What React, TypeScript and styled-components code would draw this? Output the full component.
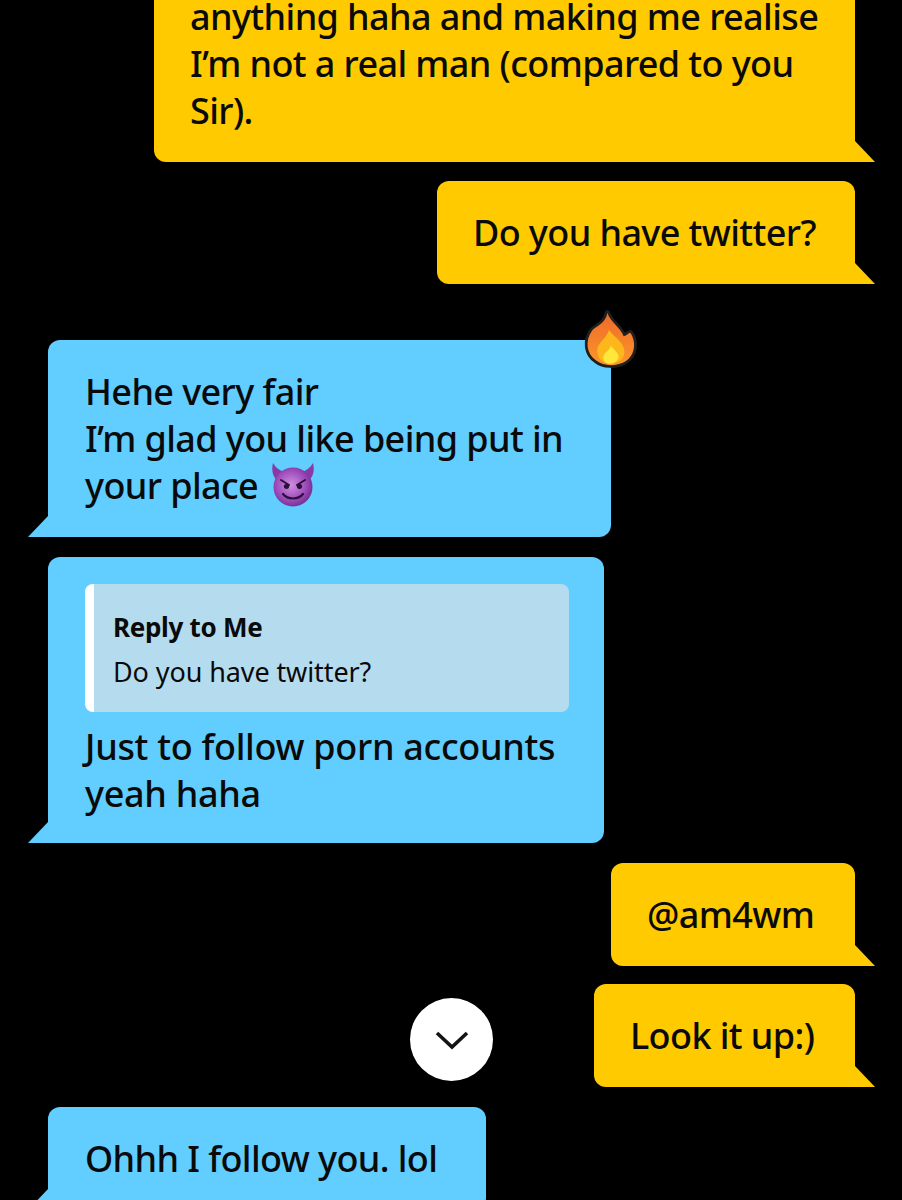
import React from 'react';
import styled, { createGlobalStyle } from 'styled-components';

const GlobalStyle = createGlobalStyle`
  html, body {
    margin: 0;
    padding: 0;
    background: #000;
  }
`;

// ─── Styled Components ────────────────────────────────────────────────────────

const Screen = styled.main`
  position: relative;
  width: 902px;
  height: 1200px;
  overflow: hidden;
  background: #000;
  font-family: 'Noto Sans', 'Open Sans', sans-serif;
  color: #0a0a0a;
`;

const Thread = styled.div`
  display: flex;
  flex-direction: column;
  padding: 0 47px 0 48px;
  margin-top: -35px;
`;

const Bubble = styled.div<{ $mine?: boolean; $width: number; $gap: number }>`
  position: relative;
  box-sizing: border-box;
  width: ${(p) => p.$width}px;
  margin-top: ${(p) => p.$gap}px;
  align-self: ${(p) => (p.$mine ? 'flex-end' : 'flex-start')};
  padding: 28px 0 28px ${(p) => (p.$mine ? 36 : 37)}px;
  background: ${(p) => (p.$mine ? '#ffcb00' : '#62cdff')};
  border-radius: ${(p) => (p.$mine ? '12px 12px 0 12px' : '12px 12px 12px 0')};
  font-size: 36px;
  font-weight: 500;
  line-height: 47px;
  letter-spacing: -0.6px;
  white-space: nowrap;

  &::after {
    content: '';
    position: absolute;
    bottom: 0;
    width: 20px;
    height: 21px;
    background: inherit;
    ${(p) =>
      p.$mine
        ? 'right: -20px; clip-path: polygon(0 0, 100% 100%, 0 100%);'
        : 'left: -20px; clip-path: polygon(100% 0, 100% 100%, 0 100%);'}
  }
`;

const ReplyQuote = styled.div`
  box-sizing: border-box;
  width: 484px;
  height: 128px;
  margin: -1px 0 11px 0;
  padding: 21px 0 0 19px;
  background: #b5dcee;
  border-left: 9px solid #fff;
  border-radius: 8px;
`;

const ReplyTitle = styled.div`
  font-size: 26px;
  line-height: 44px;
  font-weight: 700;
  letter-spacing: -0.3px;
`;

const ReplyBody = styled.div`
  font-size: 27px;
  font-weight: 400;
  line-height: 46px;
  letter-spacing: -0.1px;
`;

const ReplyText = styled.div`
  margin-bottom: -2px;
  letter-spacing: -0.3px;
`;

const ReactionIcon = styled.svg`
  position: absolute;
  top: -44px;
  right: -53px;
  width: 99px;
  height: 88px;
`;

const InlineEmoji = styled.svg`
  width: 46px;
  height: 46px;
  margin: -14px 0 -14px 12px;
  vertical-align: 5px;
`;

const ScrollDownButton = styled.button`
  position: absolute;
  left: 410px;
  top: 998px;
  width: 83px;
  height: 83px;
  padding: 0;
  border: none;
  border-radius: 50%;
  background: #fff;
  display: flex;
  align-items: center;
  justify-content: center;
`;

// ─── Drawings ─────────────────────────────────────────────────────────────────

const FireEmoji = () => (
  <ReactionIcon viewBox="0 0 270 240">
    <defs>
      <linearGradient id="flame" x1="0" y1="0" x2="0" y2="1">
        <stop offset="0" stopColor="#ee6a2a" />
        <stop offset="1" stopColor="#fb962b" />
      </linearGradient>
    </defs>
    <path
      d="M116 46C122 70 150 84 160 110C168 108 174 100 178 100C194 122 194 162 162 180C140 192 105 192 85 176C58 158 54 122 74 94C86 82 110 76 116 46Z"
      fill="url(#flame)"
      stroke="#1f1f1f"
      strokeWidth="15"
      strokeLinejoin="round"
      paintOrder="stroke"
    />
    <path
      d="M120 92C130 110 162 125 162 152C162 176 142 184 122 184C100 184 86 167 88 146C90 125 115 115 120 92Z"
      fill="#fdb71c"
    />
    <path
      d="M125 135C135 150 148 155 146 168C143 180 130 185 122 185C110 185 103 176 105 165C108 152 122 150 125 135Z"
      fill="#ffe83a"
    />
  </ReactionIcon>
);

const DevilEmoji = () => (
  <InlineEmoji viewBox="0 0 46 46">
    <defs>
      <radialGradient id="devilFace" cx="0.45" cy="0.45" r="0.6">
        <stop offset="0" stopColor="#cf8fdc" />
        <stop offset="0.6" stopColor="#a04fbe" />
        <stop offset="1" stopColor="#6f2a8c" />
      </radialGradient>
    </defs>
    <path d="M3 1C1 9 3 16 9 20L15 10C10 9 6 6 3 1Z" fill="#8a3aa6" />
    <path d="M43 1C45 9 43 16 37 20L31 10C36 9 40 6 43 1Z" fill="#8a3aa6" />
    <circle cx="23" cy="25" r="19.5" fill="url(#devilFace)" />
    <path d="M11 18L19 23M35 18L27 23" stroke="#2b0f3a" strokeWidth="2" strokeLinecap="round" />
    <ellipse cx="16.5" cy="24.5" rx="2.6" ry="2.4" fill="#2b0f3a" />
    <ellipse cx="29.5" cy="24.5" rx="2.6" ry="2.4" fill="#2b0f3a" />
    <path d="M13 32C18 38 28 38 33 32" fill="none" stroke="#2b0f3a" strokeWidth="2.2" strokeLinecap="round" />
  </InlineEmoji>
);

const ChevronDown = () => (
  <svg width="34" height="20" viewBox="0 0 34 20">
    <path d="M2 3L17 17L32 3" fill="none" stroke="#141414" strokeWidth="3.6" />
  </svg>
);

// ─── Component ────────────────────────────────────────────────────────────────

export default function App() {
  return (
    <Screen>
      <GlobalStyle />
      <Thread>
        <Bubble $mine $width={701} $gap={0}>
          anything haha and making me realise
          <br />
          I’m not a real man (compared to you
          <br />
          Sir).
        </Bubble>
        <Bubble $mine $width={418} $gap={19}>
          Do you have twitter?
        </Bubble>

        <Bubble $width={563} $gap={56}>
          Hehe very fair
          <br />
          I’m glad you like being put in
          <br />
          your place
          <DevilEmoji />
          <FireEmoji />
        </Bubble>
        <Bubble $width={556} $gap={20}>
          <ReplyQuote>
            <ReplyTitle>Reply to Me</ReplyTitle>
            <ReplyBody>Do you have twitter?</ReplyBody>
          </ReplyQuote>
          <ReplyText>
            Just to follow porn accounts
            <br />
            yeah haha
          </ReplyText>
        </Bubble>

        <Bubble $mine $width={244} $gap={20}>
          @am4wm
        </Bubble>
        <Bubble $mine $width={261} $gap={18}>
          Look it up:)
        </Bubble>

        <Bubble $width={438} $gap={20}>
          Ohhh I follow you. lol
        </Bubble>
      </Thread>
      <ScrollDownButton aria-label="Scroll to latest">
        <ChevronDown />
      </ScrollDownButton>
    </Screen>
  );
}
